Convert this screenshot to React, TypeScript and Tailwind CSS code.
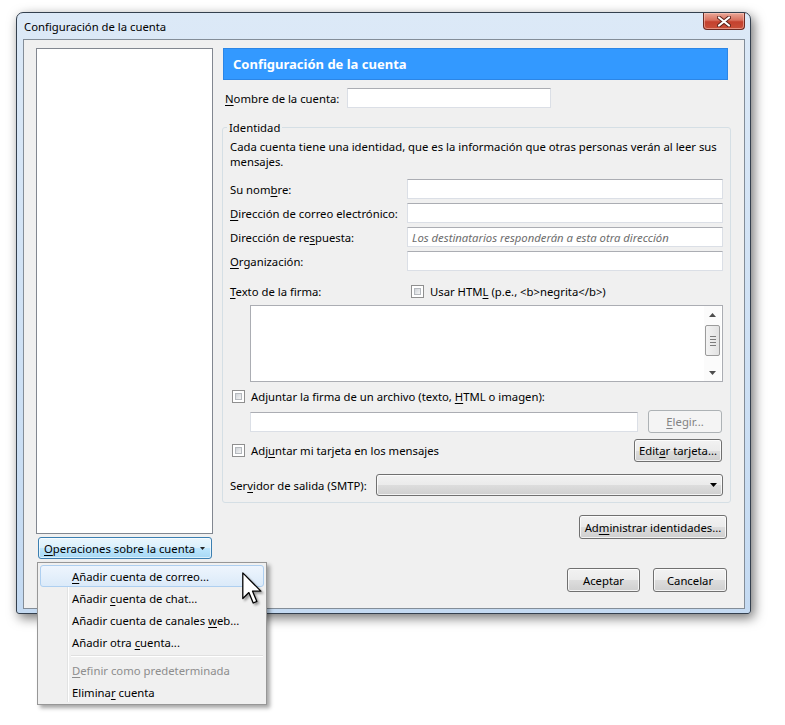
import React from "react";

function U({ children }: { children: React.ReactNode }) {
  return <span className="underline underline-offset-[2px] decoration-[1px]">{children}</span>;
}

function Input({ className = "", children }: { className?: string; children?: React.ReactNode }) {
  return (
    <div
      className={`h-[20px] bg-white border border-[#dbdfe6] border-t-[#abadb3] flex items-center px-[4px] ${className}`}
    >
      {children}
    </div>
  );
}

function Btn({
  children,
  className = "",
  disabled = false,
}: {
  children: React.ReactNode;
  className?: string;
  disabled?: boolean;
}) {
  return (
    <div
      className={`rounded-[3px] border flex items-center justify-center shrink-0 ${
        disabled
          ? "border-[#adb2b5] bg-[#f4f4f4] text-[#838383]"
          : "border-[#707070] bg-[linear-gradient(to_bottom,#f2f2f2_0%,#ebebeb_50%,#dddddd_51%,#cfcfcf_100%)] shadow-[inset_0_0_0_1px_rgba(255,255,255,0.75)]"
      } ${className}`}
    >
      {children}
    </div>
  );
}

function Check() {
  return (
    <div className="w-[13px] h-[13px] border border-[#8f8f8f] bg-white p-[2px] shrink-0">
      <div className="w-full h-full border border-[#b5b9be] bg-[linear-gradient(135deg,#cfd3d8,#f4f4f4)]" />
    </div>
  );
}

function Row({ label }: { label: React.ReactNode }) {
  return (
    <div className="flex items-center h-[20px]">
      <div className="w-[177px] shrink-0 whitespace-nowrap">{label}</div>
      <Input className="flex-1" />
    </div>
  );
}

function Arrow({ up }: { up?: boolean }) {
  return (
    <svg width="7" height="4" viewBox="0 0 7 4">
      {up ? <path d="M0 4 L3.5 0 L7 4 Z" fill="#4d4d4d" /> : <path d="M0 0 L3.5 4 L7 0 Z" fill="#4d4d4d" />}
    </svg>
  );
}

export default function App() {
  return (
    <div className="relative w-[785px] h-[725px] overflow-hidden bg-white font-['Noto_Sans',sans-serif] text-[11.3px] leading-[15px] text-black">
      <div className="pl-[16px] pt-[12px]">
        {/* Window */}
        <div className="w-[735px] h-[602px] rounded-t-[7px] rounded-b-[3px] border border-[#34404e] bg-[linear-gradient(to_bottom,#dce9f7,#c4daf2)] shadow-[3px_4px_12px_rgba(0,0,0,0.55)] flex flex-col pl-[6px] pr-[5px] pb-[4px]">
          {/* Title bar */}
          <div className="h-[26px] flex justify-between shrink-0">
            <div className="pl-[1px] pt-[6px] text-[11.3px] leading-[15px]">Configuración de la cuenta</div>
            <div className="w-[42px] h-[17px] rounded-b-[4px] border border-[#6b2a22] border-t-0 bg-[linear-gradient(to_bottom,#eaa898_0%,#d8705e_45%,#c4412e_55%,#c9503a_100%)] shadow-[inset_0_0_0_1px_rgba(255,210,200,0.5)] flex items-center justify-center">
              <svg width="14" height="11" viewBox="0 0 14 11">
                <path d="M2 1.5 L12 9.5 M12 1.5 L2 9.5" stroke="#5a2018" strokeWidth="4" strokeLinecap="round" />
                <path d="M2 1.5 L12 9.5 M12 1.5 L2 9.5" stroke="#ffffff" strokeWidth="2.2" strokeLinecap="round" />
              </svg>
            </div>
          </div>

          {/* Client area */}
          <div className="flex-1 border border-[#838d98] bg-[#f0f0f0] flex pl-[12px] pt-[8px]">
            {/* Left column */}
            <div className="w-[177px] flex flex-col shrink-0">
              <div className="h-[486px] border border-[#828790] bg-white" />
              <div className="mt-[3px] ml-[2px] w-[174px] h-[22px] rounded-[3px] border border-[#3c7fb1] bg-[linear-gradient(to_bottom,#eaf6fd_0%,#d9f0fc_50%,#bee6fd_51%,#a7d9f5_100%)] shadow-[inset_0_0_0_1px_rgba(255,255,255,0.6)] flex items-center pl-[5px]">
                <span>
                  <U>O</U>peraciones sobre la cuenta
                </span>
                <svg className="ml-[5px]" width="5" height="3" viewBox="0 0 5 3">
                  <path d="M0 0 L5 0 L2.5 3 Z" fill="#222" />
                </svg>
              </div>
            </div>

            {/* Right column */}
            <div className="ml-[9px] w-[509px] flex flex-col">
              <div className="ml-[1px] w-[505px] h-[32px] bg-[#3399ff] border border-[#2c86e6] flex items-center pl-[9px] text-white font-bold text-[13px]">
                Configuración de la cuenta
              </div>

              <div className="mt-[8px] h-[20px] flex items-center">
                <div className="w-[125px] pl-[3px] whitespace-nowrap">
                  <U>N</U>ombre de la cuenta:
                </div>
                <Input className="w-[204px]" />
              </div>

              <fieldset className="mt-[12px] border border-[#d5dfe5] rounded-[3px] px-[7px] pb-[6px]">
                <legend className="-ml-[3px] px-[2px] leading-[15px]">Identidad</legend>
                <div className="mt-[4px] whitespace-nowrap">
                  Cada cuenta tiene una identidad, que es la información que otras personas verán al leer sus
                  <br />
                  mensajes.
                </div>

                <div className="mt-[10px] flex flex-col gap-[4px]">
                  <Row
                    label={
                      <>
                        Su nom<U>b</U>re:
                      </>
                    }
                  />
                  <Row
                    label={
                      <>
                        <U>D</U>irección de correo electrónico:
                      </>
                    }
                  />
                  <div className="flex items-center h-[20px]">
                    <div className="w-[177px] shrink-0 whitespace-nowrap">
                      Dirección de re<U>s</U>puesta:
                    </div>
                    <Input className="flex-1">
                      <span className="italic text-[#6d6d6d] whitespace-nowrap">
                        Los destinatarios responderán a esta otra dirección
                      </span>
                    </Input>
                  </div>
                  <Row
                    label={
                      <>
                        <U>O</U>rganización:
                      </>
                    }
                  />
                </div>

                <div className="mt-[10px] h-[20px] flex items-center">
                  <div className="w-[181px] shrink-0 whitespace-nowrap">
                    <U>T</U>exto de la firma:
                  </div>
                  <Check />
                  <span className="ml-[6px] whitespace-nowrap">
                    Usar HTM<U>L</U> {"(p.e., <b>negrita</b>)"}
                  </span>
                </div>

                <div className="mt-[4px] ml-[20px] h-[77px] border border-[#abadb3] bg-white flex justify-end">
                  <div className="w-[17px] h-full flex flex-col items-center bg-[#fbfbfb] mr-[1px]">
                    <div className="h-[17px] flex items-center justify-center">
                      <Arrow up />
                    </div>
                    <div className="mt-[2px] w-[15px] h-[31px] rounded-[2px] border border-[#9b9b9b] bg-[linear-gradient(to_right,#f3f3f3,#e2e2e2)] flex flex-col items-center justify-center gap-[2px]">
                      <div className="w-[6px] h-[1px] bg-[#7b7b7b]" />
                      <div className="w-[6px] h-[1px] bg-[#7b7b7b]" />
                      <div className="w-[6px] h-[1px] bg-[#7b7b7b]" />
                      <div className="w-[6px] h-[1px] bg-[#7b7b7b]" />
                    </div>
                    <div className="flex-1" />
                    <div className="h-[17px] flex items-center justify-center">
                      <Arrow />
                    </div>
                  </div>
                </div>

                <div className="mt-[4px] h-[20px] flex items-center pl-[2px]">
                  <Check />
                  <span className="ml-[6px] whitespace-nowrap">
                    Adjuntar la firma de un archivo (texto, <U>H</U>TML o imagen):
                  </span>
                </div>

                <div className="mt-[4px] h-[23px] flex items-center">
                  <Input className="ml-[20px] w-[388px]" />
                  <Btn disabled className="ml-auto mr-[1px] w-[74px] h-[23px]">
                    <span>
                      <U>E</U>legir...
                    </span>
                  </Btn>
                </div>

                <div className="mt-[6px] h-[23px] flex items-center pl-[2px]">
                  <Check />
                  <span className="ml-[6px] whitespace-nowrap">
                    Adj<U>u</U>ntar mi tarjeta en los mensajes
                  </span>
                  <Btn className="ml-auto mr-[1px] w-[88px] h-[23px]">
                    <span>
                      Edit<U>a</U>r tarjeta...
                    </span>
                  </Btn>
                </div>

                <div className="mt-[12px] h-[22px] flex items-center">
                  <div className="w-[146px] shrink-0 whitespace-nowrap">
                    Ser<U>v</U>idor de salida (SMTP):
                  </div>
                  <div className="flex-1 h-[22px] rounded-[3px] border border-[#707070] bg-[linear-gradient(to_bottom,#f2f2f2_0%,#ebebeb_50%,#dddddd_51%,#cfcfcf_100%)] shadow-[inset_0_0_0_1px_rgba(255,255,255,0.75)] flex items-center justify-end pr-[5px]">
                    <svg width="7" height="4" viewBox="0 0 7 4">
                      <path d="M0 0 L7 0 L3.5 4 Z" fill="#000" />
                    </svg>
                  </div>
                </div>
              </fieldset>

              <div className="mt-[12px] flex justify-end pr-[4px]">
                <Btn className="w-[148px] h-[24px]">
                  <span>
                    Ad<U>m</U>inistrar identidades...
                  </span>
                </Btn>
              </div>

              <div className="mt-[29px] flex justify-end gap-[13px] pr-[4px]">
                <Btn className="w-[73px] h-[24px]">Aceptar</Btn>
                <Btn className="w-[74px] h-[24px]">Cancelar</Btn>
              </div>
            </div>
          </div>
        </div>
      </div>

      {/* Popup menu */}
      <div className="absolute left-[37px] top-[562px] w-[230px] h-[143px] border border-[#979797] bg-[#f0f0f0] shadow-[3px_3px_4px_rgba(0,0,0,0.35)] pt-[2px] px-[2px]">
        <div className="absolute left-[29px] top-[2px] bottom-[2px] w-[2px] border-l border-[#e2e3e3] bg-transparent">
          <div className="ml-[0px] w-[1px] h-full bg-white" />
        </div>
        <div className="relative flex flex-col">
          <div className="h-[22px] flex items-center pl-[31px] rounded-[3px] border border-[#aecff0] bg-[linear-gradient(to_bottom,#eef5fd,#dbeaf9)]">
            <span>
              <U>A</U>ñadir cuenta de correo...
            </span>
          </div>
          <div className="h-[22px] flex items-center pl-[32px]">
            <span>
              Añadir <U>c</U>uenta de chat...
            </span>
          </div>
          <div className="h-[22px] flex items-center pl-[32px]">
            <span>
              Añadir cuenta de canales <U>w</U>eb...
            </span>
          </div>
          <div className="h-[22px] flex items-center pl-[32px]">
            <span>
              Añadir otra <U>c</U>uenta...
            </span>
          </div>
          <div className="h-[6px] flex items-center pl-[31px] pr-[1px]">
            <div className="w-full h-[2px] border-t border-[#e0e0e0] bg-white" />
          </div>
          <div className="h-[22px] flex items-center pl-[32px] text-[#8d8d8d]">
            <span>
              <U>D</U>efinir como predeterminada
            </span>
          </div>
          <div className="h-[22px] flex items-center pl-[32px]">
            <span>
              Elimina<U>r</U> cuenta
            </span>
          </div>
        </div>
      </div>

      {/* Mouse cursor */}
      <svg
        className="absolute left-[242px] top-[572px] drop-shadow-[2px_2px_1px_rgba(0,0,0,0.35)]"
        width="20"
        height="33"
        viewBox="0 0 12.5 20.5"
      >
        <path
          d="M0.5 0.5 L0.5 16.5 L4.3 12.8 L7 19.3 L9.3 18.3 L6.6 11.9 L11.8 11.9 Z"
          fill="#ffffff"
          stroke="#000000"
          strokeWidth="0.8"
          strokeLinejoin="round"
        />
      </svg>
    </div>
  );
}
